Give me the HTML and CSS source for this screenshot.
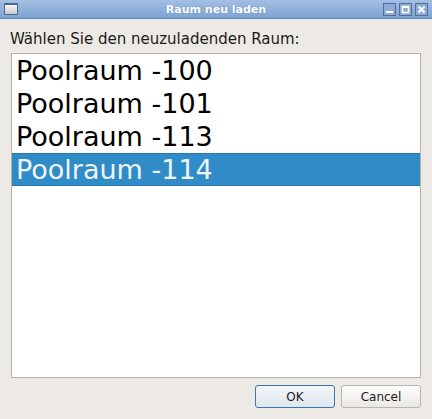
FILE: index.html
```html
<!DOCTYPE html>
<html lang="de">
<head>
  <meta charset="UTF-8">
  <title>Raum neu laden</title>
  <link rel="stylesheet" href="styles.css">
</head>
<body>
  <div class="window">
    <div class="titlebar">
      <div class="title-side">
        <div class="app-icon"></div>
      </div>
      <div class="title">Raum neu laden</div>
      <div class="title-side win-buttons">
        <div class="win-btn">
          <svg width="11" height="11" viewBox="0 0 11 11"><rect x="2" y="7" width="7" height="2" fill="#fff"/></svg>
        </div>
        <div class="win-btn">
          <svg width="11" height="11" viewBox="0 0 11 11"><rect x="2.5" y="2.5" width="6" height="6" fill="none" stroke="#fff" stroke-width="1.5"/><rect x="2" y="2" width="7" height="2" fill="#fff"/></svg>
        </div>
        <div class="win-btn">
          <svg width="11" height="11" viewBox="0 0 11 11"><path d="M2.5 2.5 L8.5 8.5 M8.5 2.5 L2.5 8.5" stroke="#fff" stroke-width="2"/></svg>
        </div>
      </div>
    </div>

    <div class="content">
      <label class="prompt">Wählen Sie den neuzuladenden Raum:</label>
      <ul class="room-list">
        <li>Poolraum -100</li>
        <li>Poolraum -101</li>
        <li>Poolraum -113</li>
        <li class="selected">Poolraum -114</li>
      </ul>
      <div class="actions">
        <button class="btn default">OK</button>
        <button class="btn">Cancel</button>
      </div>
    </div>
  </div>
</body>
</html>
```

FILE: styles.css
```css
html, body {
  margin: 0;
  padding: 0;
}

body {
  width: 432px;
  height: 419px;
  background-color: #edeae5;
  font-family: 'DejaVu Sans', sans-serif;
  overflow: hidden;
}

.window {
  display: flex;
  flex-direction: column;
  height: 100%;
}

.titlebar {
  height: 18px;
  display: flex;
  align-items: center;
  padding: 0 4px;
  background: linear-gradient(#a3bfe3, #7ea2d2);
  border-bottom: 1px solid #5d83bb;
}

.title-side {
  width: 44px;
  display: flex;
}

.app-icon {
  width: 12px;
  height: 9px;
  border: 1px solid #4a6a9a;
  border-top-width: 2px;
  background: linear-gradient(#f6f6f6, #c8c8c8);
}

.title {
  flex: 1;
  text-align: center;
  color: #fff;
  font-size: 11px;
  font-weight: bold;
  text-shadow: 0 0 1px #5d7fae;
}

.win-buttons {
  justify-content: flex-end;
  gap: 3px;
}

.win-btn {
  width: 13px;
  height: 13px;
  box-sizing: border-box;
  border: 1px solid #4f6f9e;
  background-color: #8eabd6;
  display: flex;
  align-items: center;
  justify-content: center;
}

.content {
  flex: 1;
  display: flex;
  flex-direction: column;
  padding: 11px 11px 0 11px;
}

.prompt {
  display: block;
  height: 23px;
  line-height: 18px;
  font-size: 15px;
  color: #1a1a1a;
  margin-left: -1px;
}

.room-list {
  list-style: none;
  margin: 0;
  padding: 0;
  width: 410px;
  height: 325px;
  box-sizing: border-box;
  background-color: #fff;
  border: 1px solid #b5b2ad;
}

.room-list li {
  height: 33px;
  line-height: 33px;
  padding-left: 4px;
  font-size: 27px;
  color: #000;
}

.room-list li.selected {
  height: 31px;
  line-height: 31px;
  background-color: #308cc6;
  border: 1px solid #2878b0;
  border-width: 1px 0;
  color: #eef4fa;
}

.actions {
  display: flex;
  justify-content: flex-end;
  gap: 6px;
  margin-top: 7px;
  width: 410px;
}

.btn {
  width: 80px;
  height: 23px;
  font-family: 'DejaVu Sans', sans-serif;
  font-size: 12px;
  color: #1a1a1a;
  border: 1px solid #b9b6b1;
  border-radius: 3px;
  background: linear-gradient(#fdfdfc, #eae8e5);
}

.btn.default {
  border-color: #3a78b0;
  background: linear-gradient(#f2f6f9, #dfe7ee);
}
```
